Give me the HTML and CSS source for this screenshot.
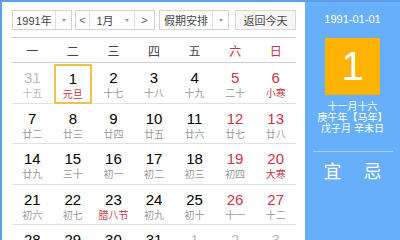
FILE: index.html
```html
<!DOCTYPE html>
<html lang="zh">
<head>
<meta charset="utf-8">
<link rel="stylesheet" href="styles.css">
</head>
<body>
<div class="cal">
  <div class="main">
    <div class="toolbar">
      <div class="sel year"><span class="txt">1991年</span><span class="arr"><i></i></span></div>
      <div class="sel month"><span class="nav">&lt;</span><span class="txt">1月</span><span class="arr"><i></i></span><span class="nav r">&gt;</span></div>
      <div class="sel hol"><span class="txt">假期安排</span><span class="arr"><i></i></span></div>
      <div class="btn">返回今天</div>
    </div>
    <div class="week">
      <span>一</span><span>二</span><span>三</span><span>四</span><span>五</span><span class="we">六</span><span class="we">日</span>
    </div>
    <div class="grid">
      <div class="day other"><b>31</b><small>十五</small></div>
      <div class="day sel-day"><b>1</b><small class="hd">元旦</small></div>
      <div class="day"><b>2</b><small>十七</small></div>
      <div class="day"><b>3</b><small>十八</small></div>
      <div class="day"><b>4</b><small>十九</small></div>
      <div class="day we"><b>5</b><small>二十</small></div>
      <div class="day we"><b>6</b><small class="hd">小寒</small></div>

      <div class="day"><b>7</b><small>廿二</small></div>
      <div class="day"><b>8</b><small>廿三</small></div>
      <div class="day"><b>9</b><small>廿四</small></div>
      <div class="day"><b>10</b><small>廿五</small></div>
      <div class="day"><b>11</b><small>廿六</small></div>
      <div class="day we"><b>12</b><small>廿七</small></div>
      <div class="day we"><b>13</b><small>廿八</small></div>

      <div class="day"><b>14</b><small>廿九</small></div>
      <div class="day"><b>15</b><small>三十</small></div>
      <div class="day"><b>16</b><small>初一</small></div>
      <div class="day"><b>17</b><small>初二</small></div>
      <div class="day"><b>18</b><small>初三</small></div>
      <div class="day we"><b>19</b><small>初四</small></div>
      <div class="day we"><b>20</b><small class="hd">大寒</small></div>

      <div class="day"><b>21</b><small>初六</small></div>
      <div class="day"><b>22</b><small>初七</small></div>
      <div class="day"><b>23</b><small class="hd">腊八节</small></div>
      <div class="day"><b>24</b><small>初九</small></div>
      <div class="day"><b>25</b><small>初十</small></div>
      <div class="day we"><b>26</b><small>十一</small></div>
      <div class="day we"><b>27</b><small>十二</small></div>

      <div class="day"><b>28</b><small>十三</small></div>
      <div class="day"><b>29</b><small>十四</small></div>
      <div class="day"><b>30</b><small>十五</small></div>
      <div class="day"><b>31</b><small>十六</small></div>
      <div class="day other"><b>1</b><small>十七</small></div>
      <div class="day other"><b>2</b><small>十八</small></div>
      <div class="day other"><b>3</b><small>十九</small></div>
    </div>
  </div>
  <div class="side">
    <div class="date">1991-01-01</div>
    <div class="big">1</div>
    <div class="lunar">十一月十六</div>
    <div class="lunar">庚午年【马年】</div>
    <div class="lunar">戊子月 辛未日</div>
    <div class="yj"><span>宜</span><span>忌</span></div>
  </div>
</div>
</body>
</html>
```
FILE: styles.css
```css
html, body {
  margin: 0;
  padding: 0;
  background: #fff;
  overflow: hidden;
}
body {
  font-family: "Liberation Sans", Arial, "Noto Sans CJK SC", sans-serif;
  color: #333;
}
.cal {
  display: flex;
  width: 398px;
  height: 260px;
  border-left: 2px solid #5c9fe6;
  border-top: 2px solid #5c9fe6;
}
.main {
  width: 284px;
  padding: 8px 9px 0 10px;
  background: #fff;
}
.toolbar {
  display: flex;
  align-items: center;
  height: 20px;
  padding-bottom: 7px;
  border-bottom: 1px solid #c9d0d8;
  font-size: 11px;
  color: #444;
}
.sel {
  display: flex;
  height: 18px;
  border: 1px solid #d4d4d4;
  background: #fff;
}
.sel .txt {
  display: flex;
  align-items: center;
  justify-content: center;
}
.sel .arr {
  display: flex;
  align-items: center;
  justify-content: center;
  width: 15px;
  border-left: 1px solid #e2e2e2;
}
.sel .arr i {
  width: 0;
  height: 0;
  border-left: 2.5px solid transparent;
  border-right: 2.5px solid transparent;
  border-top: 3px solid #999;
}
.year .txt { width: 42px; }
.month { margin-left: 3px; }
.month .nav {
  display: flex;
  align-items: center;
  justify-content: center;
  width: 13px;
  color: #666;
  border-right: 1px solid #e2e2e2;
}
.month .nav.r {
  border-right: 0;
  border-left: 1px solid #e2e2e2;
  width: 19px;
}
.month .txt { width: 30px; }
.month .arr { border-left: 0; width: 14px; }
.hol { margin-left: 4px; }
.hol .txt { width: 52px; }
.btn {
  margin-left: 6px;
  width: 60px;
  height: 18px;
  border: 1px solid #dadada;
  background: #f6f6f6;
  display: flex;
  align-items: center;
  justify-content: center;
  color: #444;
}
.week {
  display: grid;
  grid-template-columns: repeat(7, 1fr);
  height: 24px;
  border-bottom: 1px solid #c9d0d8;
  font-size: 12px;
  color: #444;
}
.week span {
  display: flex;
  align-items: center;
  justify-content: center;
}
.week .we { color: #c9364a; }
.grid {
  display: grid;
  grid-template-columns: repeat(7, 1fr);
  grid-auto-rows: 40.5px;
}
.day {
  box-sizing: border-box;
  border-bottom: 1px solid #dde2e7;
  display: flex;
  flex-direction: column;
  align-items: center;
  padding-top: 7px;
}
.day b {
  font-weight: normal;
  font-size: 15px;
  line-height: 16px;
  color: #000;
}
.day small {
  font-size: 10px;
  line-height: 14px;
  margin-top: 1px;
  color: #999;
}
.day.we b { color: #c9364a; }
.day small.hd { color: #c9364a; }
.day.other b { color: #bbb; }
.day.other small { color: #bbb; }
.sel-day {
  border: 2px solid #f3c14a;
  margin: 1px 1px 0 1px;
  padding-top: 5px;
}
.side {
  flex: 1;
  background: #68affa;
  color: #fff;
  display: flex;
  flex-direction: column;
  align-items: center;
}
.date {
  font-size: 11px;
  margin-top: 10px;
  line-height: 14px;
}
.big {
  margin-top: 12px;
  width: 55px;
  height: 57px;
  background: #ffb304;
  font-size: 40px;
  line-height: 57px;
  text-align: center;
}
.lunar {
  font-size: 10px;
  line-height: 11px;
}
.big + .lunar { margin-top: 6px; }
.yj {
  margin-top: 17px;
  width: 80px;
  border-top: 1px solid #a5cdf8;
  display: flex;
  justify-content: space-around;
  padding-top: 9px;
  font-size: 18px;
  line-height: 22px;
}
```
